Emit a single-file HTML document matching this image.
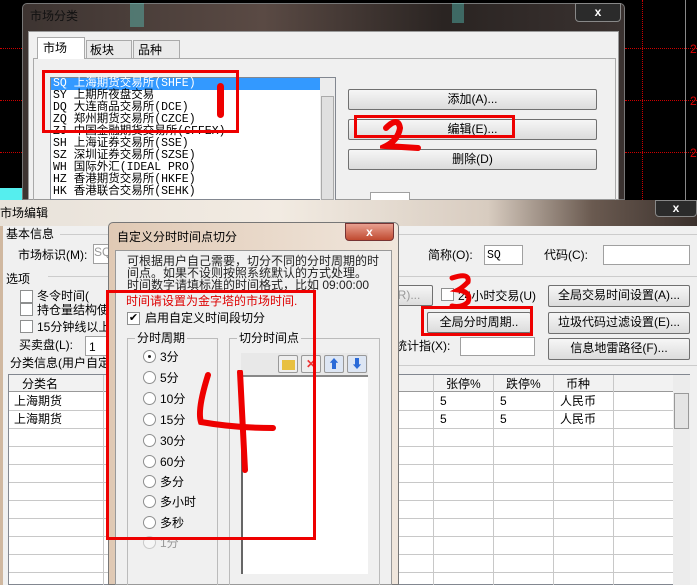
<!DOCTYPE html><html><head><meta charset="utf-8"><style>
*{margin:0;padding:0;box-sizing:border-box}
body{width:697px;height:585px;overflow:hidden;background:#000;position:relative;font:12px "Liberation Sans","WenQuanYi Zen Hei","Noto Sans CJK SC",sans-serif;color:#000}
.a{position:absolute}
.t{position:absolute;white-space:nowrap;line-height:12px}
.btn{position:absolute;background:linear-gradient(#f6f6f6,#dcdcdc);border:1px solid #707070;text-align:center;line-height:18px;border-radius:2px}
.inp{position:absolute;background:#fff;border:1px solid #a0a0a0}
.cb{position:absolute;width:13px;height:13px;border:1px solid #8e8f8f;background:#fff}
.rd{position:absolute;width:13px;height:13px;border:1px solid #8e8f8f;border-radius:50%;background:#fff}
.red{position:absolute;border:3px solid #e00}
.hl{position:absolute;height:1px;background:#c8c8c8}
.vl{position:absolute;width:1px;background:#c8c8c8}
.mono{font-family:"Liberation Mono","WenQuanYi Zen Hei",monospace;font-size:11.5px}
</style></head><body>
<div class="a" style="left:625px;top:48px;width:72px;border-top:1px dotted #c00"></div>
<div class="a" style="left:625px;top:100px;width:72px;border-top:1px dotted #c00"></div>
<div class="a" style="left:625px;top:152px;width:72px;border-top:1px dotted #c00"></div>
<div class="a" style="left:0;top:48px;width:22px;border-top:1px dotted #c00"></div>
<div class="a" style="left:0;top:100px;width:22px;border-top:1px dotted #c00"></div>
<div class="a" style="left:0;top:152px;width:22px;border-top:1px dotted #c00"></div>
<div class="a" style="left:642px;top:0;height:200px;border-left:1px dotted #c00"></div>
<div class="a" style="left:685px;top:0;height:200px;width:1px;background:#888"></div>
<div class="t" style="left:690px;top:43px;color:#d00">2</div>
<div class="t" style="left:690px;top:95px;color:#d00">2</div>
<div class="t" style="left:690px;top:147px;color:#d00">2</div>
<div class="a" style="left:0;top:188px;width:22px;height:12px;background:#5ee"></div>

<div class="a" style="left:22px;top:3px;width:603px;height:197px;background:linear-gradient(90deg,#3d3431,#5a4a44 40%,#2a2422 70%,#3a3230);border:1px solid #777;border-radius:5px 5px 0 0"></div>
<div class="a" style="left:130px;top:3px;width:14px;height:24px;background:#5ccfc5;opacity:.4"></div>
<div class="a" style="left:452px;top:3px;width:12px;height:20px;background:#5ccfc5;opacity:.4"></div>
<div class="t" style="left:30px;top:10px;color:#111">市场分类</div>
<div class="a" style="left:575px;top:3px;width:46px;height:19px;border:1px solid #888;border-radius:0 0 4px 4px;background:#2b2b2b;color:#fff;text-align:center;font-weight:bold;line-height:17px">x</div>
<div class="a" style="left:28px;top:31px;width:591px;height:169px;background:#f0f0f0;border:1px solid #999"></div>
<div class="a" style="left:33px;top:58px;width:583px;height:142px;border:1px solid #aaa;border-bottom:none"></div>
<div class="a" style="left:37px;top:37px;width:48px;height:22px;background:#fff;border:1px solid #aaa;border-bottom:none"></div>
<div class="t" style="left:43px;top:42px">市场</div>
<div class="a" style="left:86px;top:40px;width:46px;height:18px;background:#eaeaea;border:1px solid #aaa;border-bottom:none"></div>
<div class="t" style="left:90px;top:44px">板块</div>
<div class="a" style="left:133px;top:40px;width:47px;height:18px;background:#eaeaea;border:1px solid #aaa;border-bottom:none"></div>
<div class="t" style="left:138px;top:44px">品种</div>
<div class="a" style="left:50px;top:77px;width:286px;height:123px;background:#fff;border:1px solid #828790"></div>
<div class="a" style="left:320px;top:78px;width:15px;height:122px;background:#ececec"></div>
<div class="a" style="left:321px;top:96px;width:13px;height:104px;background:#e0e0e0;border:1px solid #aaa"></div>
<div class="a" style="left:51px;top:78px;width:269px;height:12px;background:#3399ff"></div>
<div class="mono" style="position:absolute;left:53px;top:78px;line-height:12px;white-space:pre"><span style="color:#fff">SQ 上海期货交易所(SHFE)</span>
SY 上期所夜盘交易
DQ 大连商品交易所(DCE)
ZQ 郑州期货交易所(CZCE)
ZJ 中国金融期货交易所(CFFEX)
SH 上海证券交易所(SSE)
SZ 深圳证券交易所(SZSE)
WH 国际外汇(IDEAL PRO)
HZ 香港期货交易所(HKFE)
HK 香港联合交易所(SEHK)</div>
<div class="red" style="left:42px;top:70px;width:197px;height:63px"></div>
<div class="a" style="left:217px;top:83px;width:7px;height:35px;background:#e00;border-radius:4px"></div>
<div class="btn" style="left:348px;top:89px;width:249px;height:21px">添加(A)...</div>
<div class="btn" style="left:348px;top:119px;width:249px;height:21px">编辑(E)...</div>
<div class="btn" style="left:348px;top:149px;width:249px;height:21px">删除(D)</div>
<div class="red" style="left:354px;top:115px;width:161px;height:23px"></div>
<svg class="a" style="left:380px;top:118px" width="50" height="36"><path d="M6 10 Q18 -2 20 10 Q18 22 6 28 L38 30" stroke="#e00" stroke-width="6" fill="none" stroke-linecap="round"/></svg>
<div class="inp" style="left:370px;top:192px;width:40px;height:10px"></div>

<div class="a" style="left:0;top:200px;width:697px;height:26px;background:linear-gradient(90deg,#e8e2da,#f2ebe2 40%,#d8ccc0 70%,#6a5a50 85%,#3a302c)"></div>
<div class="t" style="left:0;top:207px">市场编辑</div>
<div class="a" style="left:655px;top:200px;width:42px;height:17px;border:1px solid #888;border-radius:0 0 4px 4px;background:#2b2b2b;color:#fff;text-align:center;font-weight:bold;line-height:15px">x</div>
<div class="a" style="left:0;top:226px;width:697px;height:359px;background:#f0f0f0;border-left:3px solid #d0b8a0"></div>
<div class="t" style="left:6px;top:228px">基本信息</div>
<div class="a" style="left:60px;top:234px;width:637px;height:1px;background:#ccc"></div>
<div class="t" style="left:18px;top:249px">市场标识(M):</div>
<div class="inp" style="left:93px;top:244px;width:20px;height:20px;color:#999">SQ</div>
<div class="t" style="left:428px;top:249px">简称(O):</div>
<div class="inp mono" style="left:484px;top:245px;width:39px;height:20px;padding:3px 2px">SQ</div>
<div class="t" style="left:544px;top:249px">代码(C):</div>
<div class="inp" style="left:603px;top:245px;width:87px;height:20px"></div>
<div class="t" style="left:6px;top:273px">选项</div>
<div class="a" style="left:48px;top:276px;width:649px;height:1px;background:#ccc"></div>
<div class="cb" style="left:20px;top:290px"></div><div class="t" style="left:37px;top:290px">冬令时间(</div>
<div class="cb" style="left:20px;top:303px"></div><div class="t" style="left:37px;top:304px">持仓量结构使</div>
<div class="cb" style="left:20px;top:320px"></div><div class="t" style="left:37px;top:321px">15分钟线以上</div>
<div class="t" style="left:19px;top:339px">买卖盘(L):</div>
<div class="inp" style="left:85px;top:336px;width:25px;height:20px;padding:3px">1</div>
<div class="t" style="left:10px;top:357px">分类信息(用户自定</div>
<div class="btn" style="left:385px;top:285px;width:48px;height:21px;color:#999">R)...</div>
<div class="cb" style="left:441px;top:288px"></div><div class="t" style="left:458px;top:290px">24小时交易(U)</div>
<div class="btn" style="left:548px;top:285px;width:142px;height:22px">全局交易时间设置(A)...</div>
<div class="btn" style="left:427px;top:312px;width:104px;height:21px">全局分时周期..</div>
<div class="red" style="left:421px;top:306px;width:112px;height:30px"></div>
<svg class="a" style="left:448px;top:272px" width="30" height="40"><path d="M4 6 Q22 0 20 10 Q14 16 10 18 Q24 20 20 30 Q14 36 4 34" stroke="#e00" stroke-width="5" fill="none" stroke-linecap="round"/></svg>
<div class="btn" style="left:548px;top:312px;width:142px;height:22px">垃圾代码过滤设置(E)...</div>
<div class="t" style="left:395px;top:340px">统计指(X):</div>
<div class="inp" style="left:460px;top:337px;width:75px;height:19px"></div>
<div class="btn" style="left:548px;top:338px;width:142px;height:22px">信息地雷路径(F)...</div>
<div class="a" style="left:390px;top:365px;width:307px;height:1px;background:#ccc"></div>
<div class="a" style="left:8px;top:374px;width:682px;height:211px;background:#fff;border:1px solid #828790"></div>
<div class="a" style="left:9px;top:375px;width:664px;height:17px;background:#f2f2f2;border-bottom:1px solid #999"></div>
<div class="t" style="left:22px;top:378px">分类名</div>
<div class="t" style="left:446px;top:378px">张停%</div>
<div class="t" style="left:506px;top:378px">跌停%</div>
<div class="t" style="left:566px;top:378px">币种</div>
<div class="vl" style="left:103px;top:375px;height:210px"></div>
<div class="vl" style="left:433px;top:375px;height:210px"></div>
<div class="vl" style="left:493px;top:375px;height:210px"></div>
<div class="vl" style="left:553px;top:375px;height:210px"></div>
<div class="vl" style="left:613px;top:375px;height:210px"></div>
<div class="hl" style="left:9px;top:410px;width:664px"></div>
<div class="hl" style="left:9px;top:428px;width:664px"></div>
<div class="hl" style="left:9px;top:446px;width:664px"></div>
<div class="hl" style="left:9px;top:464px;width:664px"></div>
<div class="hl" style="left:9px;top:482px;width:664px"></div>
<div class="hl" style="left:9px;top:500px;width:664px"></div>
<div class="hl" style="left:9px;top:518px;width:664px"></div>
<div class="hl" style="left:9px;top:536px;width:664px"></div>
<div class="hl" style="left:9px;top:554px;width:664px"></div>
<div class="hl" style="left:9px;top:572px;width:664px"></div>
<div class="t" style="left:14px;top:395px">上海期货</div><div class="t" style="left:14px;top:413px">上海期货</div>
<div class="t" style="left:440px;top:395px">5</div><div class="t" style="left:500px;top:395px">5</div><div class="t" style="left:560px;top:395px">人民币</div>
<div class="t" style="left:440px;top:413px">5</div><div class="t" style="left:500px;top:413px">5</div><div class="t" style="left:560px;top:413px">人民币</div>
<div class="a" style="left:673px;top:375px;width:17px;height:210px;background:#ececec"></div>
<div class="a" style="left:674px;top:393px;width:15px;height:36px;background:#e4e4e4;border:1px solid #999"></div>

<div class="a" style="left:108px;top:222px;width:291px;height:363px;background:linear-gradient(90deg,#e0c9b4,#f0e6dc);border:1px solid #777;border-radius:5px 5px 0 0"></div>
<div class="t" style="left:117px;top:231px">自定义分时时间点切分</div>
<div class="a" style="left:345px;top:223px;width:49px;height:18px;border:1px solid #733;border-radius:0 0 4px 4px;background:linear-gradient(#e8a090,#c04a30);color:#fff;text-align:center;font-weight:bold;line-height:16px">x</div>
<div class="a" style="left:115px;top:250px;width:277px;height:335px;background:#f0f0f0;border:1px solid #999"></div>
<div class="t" style="left:127px;top:255px;color:#222">可根据用户自己需要，切分不同的分时周期的时</div>
<div class="t" style="left:127px;top:267px;color:#222">间点。如果不设则按照系统默认的方式处理。</div>
<div class="t" style="left:127px;top:279px;color:#222">时间数字请填标准的时间格式，比如 09:00:00</div>
<div class="t" style="left:126px;top:295px;color:#d00">时间请设置为金字塔的市场时间.</div>
<div class="cb" style="left:127px;top:312px;font-size:11px;line-height:10px;text-align:center">✔</div>
<div class="t" style="left:145px;top:312px">启用自定义时间段切分</div>
<div class="a" style="left:127px;top:338px;width:91px;height:247px;border:1px solid #bbb;border-bottom:none"></div>
<div class="t" style="left:135px;top:332px;background:#f0f0f0;padding:0 2px">分时周期</div>
<div class="a" style="left:229px;top:338px;width:151px;height:247px;border:1px solid #bbb;border-bottom:none"></div>
<div class="t" style="left:237px;top:332px;background:#f0f0f0;padding:0 2px">切分时间点</div>
<div class="rd" style="left:143px;top:350px"><div class="a" style="left:4px;top:4px;width:3px;height:3px;background:#222;border-radius:50%"></div></div><div class="t" style="left:160px;top:351px">3分</div>
<div class="rd" style="left:143px;top:371px"></div><div class="t" style="left:160px;top:372px">5分</div>
<div class="rd" style="left:143px;top:392px"></div><div class="t" style="left:160px;top:393px">10分</div>
<div class="rd" style="left:143px;top:413px"></div><div class="t" style="left:160px;top:414px">15分</div>
<div class="rd" style="left:143px;top:434px"></div><div class="t" style="left:160px;top:435px">30分</div>
<div class="rd" style="left:143px;top:455px"></div><div class="t" style="left:160px;top:456px">60分</div>
<div class="rd" style="left:143px;top:475px"></div><div class="t" style="left:160px;top:476px">多分</div>
<div class="rd" style="left:143px;top:495px"></div><div class="t" style="left:160px;top:496px">多小时</div>
<div class="rd" style="left:143px;top:516px"></div><div class="t" style="left:160px;top:517px">多秒</div>
<div class="rd" style="left:143px;top:536px;opacity:.4"></div><div class="t" style="left:160px;top:537px;color:#999">1分</div>
<div class="a" style="left:241px;top:353px;width:127px;height:24px;background:#e8e8e8;border-bottom:2px solid #888"></div>
<div class="a" style="left:278px;top:355px;width:20px;height:18px;border:1px solid #999;border-radius:2px;background:#eee"><div class="a" style="left:3px;top:4px;width:13px;height:10px;background:#e8c040"></div></div>
<div class="a" style="left:301px;top:355px;width:20px;height:18px;border:1px solid #999;border-radius:2px;background:#eee;color:#e33;text-align:center;font-weight:bold;line-height:16px">✕</div>
<div class="a" style="left:324px;top:355px;width:20px;height:18px;border:1px solid #999;border-radius:2px;background:#dde6f4;color:#2a6ad8;text-align:center;line-height:16px">⬆</div>
<div class="a" style="left:347px;top:355px;width:20px;height:18px;border:1px solid #999;border-radius:2px;background:#dde6f4;color:#2a6ad8;text-align:center;line-height:16px">⬇</div>
<div class="a" style="left:241px;top:377px;width:127px;height:197px;background:#fff;border-left:2px solid #666"></div>
<div class="red" style="left:106px;top:290px;width:210px;height:250px"></div>
<svg class="a" style="left:195px;top:370px" width="90" height="110"><path d="M13 5 Q2 40 6 52 Q40 58 78 58" stroke="#e00" stroke-width="6" fill="none" stroke-linecap="round"/><path d="M45 2 L50 100" stroke="#e00" stroke-width="6" fill="none" stroke-linecap="round"/></svg>
</body></html>
